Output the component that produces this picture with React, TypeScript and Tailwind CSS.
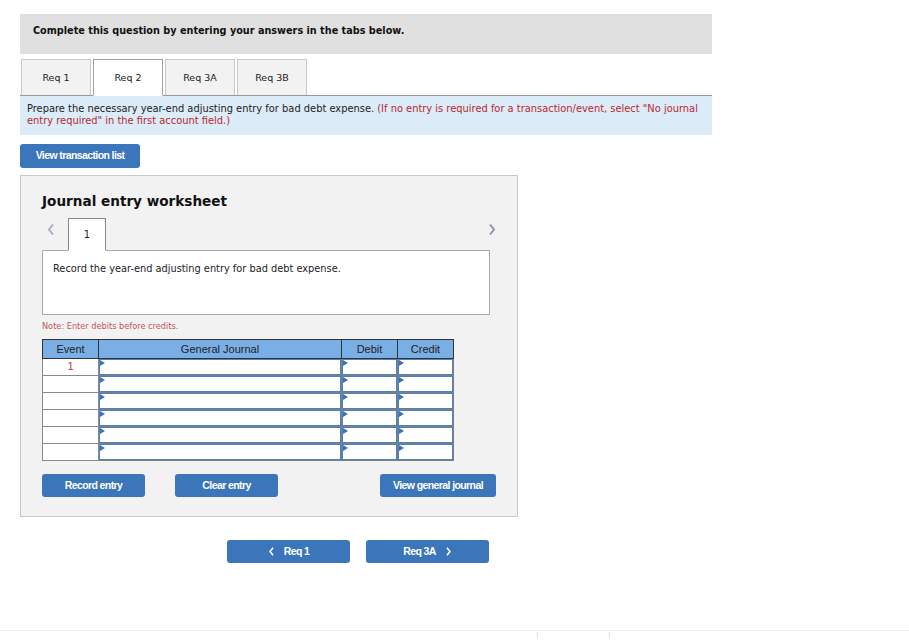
import React from 'react'

const Chevron = ({ dir, className }: { dir: 'left' | 'right'; className?: string }) => (
  <svg viewBox="0 0 8 12" className={className} fill="none" stroke="currentColor" strokeWidth={2}>
    {dir === 'left' ? <polyline points="6,1 2,6 6,11" /> : <polyline points="2,1 6,6 2,11" />}
  </svg>
)

function InputCell() {
  return (
    <td className="border border-[#7f7f7f] p-0 h-[17px]">
      <div className="relative h-full border border-[#4f81bd] bg-white">
        <span className="absolute left-0 top-0 w-0 h-0 border-t-[3px] border-b-[3px] border-l-[5px] border-t-transparent border-b-transparent border-l-[#3b73b9]" />
      </div>
    </td>
  )
}

const btn =
  "h-[23px] bg-[#3a76b9] rounded-[3px] text-white font-bold text-[10.5px] tracking-[-0.6px] font-['Liberation_Sans',Arial,sans-serif] flex items-center justify-center"

export default function App() {
  const tabs = ['Req 1', 'Req 2', 'Req 3A', 'Req 3B']
  const rows = [0, 1, 2, 3, 4, 5]

  return (
    <div className="w-[909px] h-[641px] bg-white font-['DejaVu_Sans',Verdana,sans-serif] text-[11px] text-[#222] overflow-hidden">
      <div className="pt-[14px] pl-[20px] w-[712px]">
        <div className="h-[40px] bg-[#e0e0e0] pl-[13px] pt-[10px] font-bold text-[9.7px] text-[#111]">
          Complete this question by entering your answers in the tabs below.
        </div>

        {/* tabs */}
        <div className="mt-[5px] flex gap-[2px] pl-[1px] border-b border-[#9a9a9a]">
          {tabs.map((t, i) => (
            <div
              key={t}
              className={
                i === 1
                  ? 'w-[70px] h-[37px] -mb-px bg-white border border-[#a0a0a0] border-b-white flex items-center justify-center text-[9.5px] pt-[1px]'
                  : 'w-[70px] h-[36px] bg-[#f2f2f2] border border-b-0 border-[#c8c8c8] flex items-center justify-center text-[9.5px] pt-[1px]'
              }
            >
              {t}
            </div>
          ))}
        </div>

        <div className="bg-[#dbebf8] px-[7px] pt-[7px] pb-[8px] text-[9.9px] leading-[12px]">
          Prepare the necessary year-end adjusting entry for bad debt expense.{' '}
          <span className="text-[#b8282e]">
            (If no entry is required for a transaction/event, select "No journal entry required" in the first account field.)
          </span>
        </div>

        <button className={btn + ' mt-[9px] w-[120px] h-[24px]'}>View transaction list</button>

        {/* worksheet */}
        <div className="mt-[7px] w-[498px] h-[342px] bg-[#f2f2f2] border border-[#c8c8c8] pl-[21px] pt-[15px]">
          <div className="font-bold text-[13.6px] text-[#111] leading-[20px]">Journal entry worksheet</div>

          <div className="mt-[7px] w-[448px] flex items-end">
            <Chevron dir="left" className="w-[8px] h-[13px] text-[#a7afbd] mb-[14px] ml-[5px]" />
            <div className="ml-[13px] w-[38px] h-[33px] -mb-px bg-white border border-[#888] border-b-white flex items-center justify-center text-[10px] relative z-10">
              1
            </div>
            <Chevron dir="right" className="w-[8px] h-[13px] text-[#8c97aa] mb-[14px] ml-auto mr-[-6px]" />
          </div>
          <div className="w-[448px] h-[65px] bg-white border border-[#aaa] pl-[10px] pt-[11px] text-[9.8px]">
            Record the year-end adjusting entry for bad debt expense.
          </div>

          <div className="mt-[5px] text-[8.2px] text-[#c0565d]">Note: Enter debits before credits.</div>

          <table className="mt-[7px] w-[412px] border-collapse border border-[#777] font-['Liberation_Sans',Arial,sans-serif] text-[11px] table-fixed">
            <thead>
              <tr className="h-[19px] bg-[#7aafe6] text-[#222]">
                <th className="w-[56px] font-normal border border-[#333]">Event</th>
                <th className="w-[243px] font-normal border border-[#333]">General Journal</th>
                <th className="w-[56px] font-normal border border-[#333]">Debit</th>
                <th className="w-[56px] font-normal border border-[#333]">Credit</th>
              </tr>
            </thead>
            <tbody>
              {rows.map((r) => (
                <tr key={r} className="h-[17px]">
                  <td className="border border-[#8a8a8a] bg-white text-center text-[#b33a3a] text-[11px] align-top leading-[14px]">
                    {r === 0 ? '1' : ''}
                  </td>
                  <InputCell />
                  <InputCell />
                  <InputCell />
                </tr>
              ))}
            </tbody>
          </table>

          <div className="mt-[13px] flex">
            <button className={btn + ' w-[103px]'}>Record entry</button>
            <button className={btn + ' w-[103px] ml-[30px]'}>Clear entry</button>
            <button className={btn + ' w-[116px] ml-[102px]'}>View general journal</button>
          </div>
        </div>

        <div className="mt-[23px] ml-[207px] flex gap-[16px]">
          <button className={btn + ' w-[123px] h-[23px] gap-[9px]'}>
            <Chevron dir="left" className="w-[7px] h-[9px] text-white" />
            <span>Req 1</span>
          </button>
          <button className={btn + ' w-[123px] h-[23px] gap-[9px]'}>
            <span>Req 3A</span>
            <Chevron dir="right" className="w-[7px] h-[9px] text-white" />
          </button>
        </div>
      </div>

      <div className="mt-[67px] border-t border-[#ececec] pl-[537px]">
        <div className="w-[73px] h-[7px] mt-[1px] border-l border-r border-[#e2e2e2]" />
      </div>
    </div>
  )
}
